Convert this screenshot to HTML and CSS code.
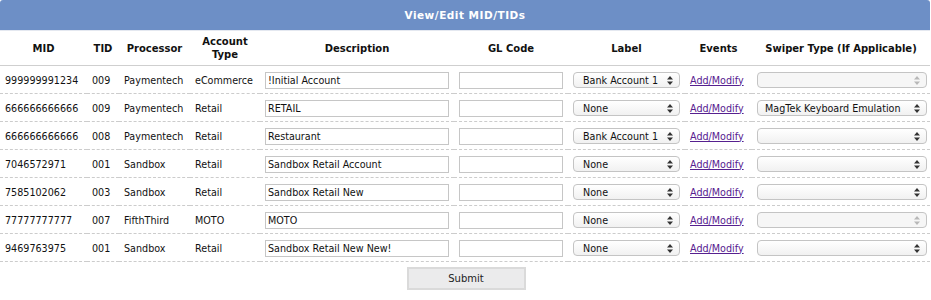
FILE: index.html
```html
<!DOCTYPE html>
<html>
<head>
<meta charset="utf-8">
<link rel="stylesheet" href="styles.css">
</head>
<body>
<form class="page">
<table class="grid">
  <colgroup>
    <col class="c-mid"><col class="c-tid"><col class="c-proc"><col class="c-type"><col class="c-desc"><col class="c-gl"><col class="c-label"><col class="c-events"><col class="c-swiper">
  </colgroup>
  <thead>
    <tr><th class="title" colspan="9">View/Edit MID/TIDs</th></tr>
    <tr class="heads">
      <th>MID</th><th>TID</th><th>Processor</th><th>Account<br>Type</th><th>Description</th><th>GL Code</th><th>Label</th><th>Events</th><th>Swiper Type (If Applicable)</th>
    </tr>
  </thead>
  <tbody>
    <tr>
      <td>999999991234</td><td>009</td><td>Paymentech</td><td>eCommerce</td>
      <td><input class="txt desc" value="!Initial Account"></td>
      <td><input class="txt gl" value=""></td>
      <td><span class="sel label-sel"><span class="val">Bank Account 1</span><svg class="arr" width="6" height="9" viewBox="0 0 6 9"><path d="M3 0L6 3.5H0Z M3 9L6 5.5H0Z"/></svg></span></td>
      <td><a class="lnk" href="#">Add/Modify</a></td>
      <td><span class="sel swiper-sel off"><span class="val"></span><svg class="arr" width="6" height="9" viewBox="0 0 6 9"><path d="M3 0L6 3.5H0Z M3 9L6 5.5H0Z"/></svg></span></td>
    </tr>
    <tr>
      <td>666666666666</td><td>009</td><td>Paymentech</td><td>Retail</td>
      <td><input class="txt desc" value="RETAIL"></td>
      <td><input class="txt gl" value=""></td>
      <td><span class="sel label-sel"><span class="val">None</span><svg class="arr" width="6" height="9" viewBox="0 0 6 9"><path d="M3 0L6 3.5H0Z M3 9L6 5.5H0Z"/></svg></span></td>
      <td><a class="lnk" href="#">Add/Modify</a></td>
      <td><span class="sel swiper-sel"><span class="val">MagTek Keyboard Emulation</span><svg class="arr" width="6" height="9" viewBox="0 0 6 9"><path d="M3 0L6 3.5H0Z M3 9L6 5.5H0Z"/></svg></span></td>
    </tr>
    <tr>
      <td>666666666666</td><td>008</td><td>Paymentech</td><td>Retail</td>
      <td><input class="txt desc" value="Restaurant"></td>
      <td><input class="txt gl" value=""></td>
      <td><span class="sel label-sel"><span class="val">Bank Account 1</span><svg class="arr" width="6" height="9" viewBox="0 0 6 9"><path d="M3 0L6 3.5H0Z M3 9L6 5.5H0Z"/></svg></span></td>
      <td><a class="lnk" href="#">Add/Modify</a></td>
      <td><span class="sel swiper-sel"><span class="val"></span><svg class="arr" width="6" height="9" viewBox="0 0 6 9"><path d="M3 0L6 3.5H0Z M3 9L6 5.5H0Z"/></svg></span></td>
    </tr>
    <tr>
      <td>7046572971</td><td>001</td><td>Sandbox</td><td>Retail</td>
      <td><input class="txt desc" value="Sandbox Retail Account"></td>
      <td><input class="txt gl" value=""></td>
      <td><span class="sel label-sel"><span class="val">None</span><svg class="arr" width="6" height="9" viewBox="0 0 6 9"><path d="M3 0L6 3.5H0Z M3 9L6 5.5H0Z"/></svg></span></td>
      <td><a class="lnk" href="#">Add/Modify</a></td>
      <td><span class="sel swiper-sel"><span class="val"></span><svg class="arr" width="6" height="9" viewBox="0 0 6 9"><path d="M3 0L6 3.5H0Z M3 9L6 5.5H0Z"/></svg></span></td>
    </tr>
    <tr>
      <td>7585102062</td><td>003</td><td>Sandbox</td><td>Retail</td>
      <td><input class="txt desc" value="Sandbox Retail New"></td>
      <td><input class="txt gl" value=""></td>
      <td><span class="sel label-sel"><span class="val">None</span><svg class="arr" width="6" height="9" viewBox="0 0 6 9"><path d="M3 0L6 3.5H0Z M3 9L6 5.5H0Z"/></svg></span></td>
      <td><a class="lnk" href="#">Add/Modify</a></td>
      <td><span class="sel swiper-sel"><span class="val"></span><svg class="arr" width="6" height="9" viewBox="0 0 6 9"><path d="M3 0L6 3.5H0Z M3 9L6 5.5H0Z"/></svg></span></td>
    </tr>
    <tr>
      <td>77777777777</td><td>007</td><td>FifthThird</td><td>MOTO</td>
      <td><input class="txt desc" value="MOTO"></td>
      <td><input class="txt gl" value=""></td>
      <td><span class="sel label-sel"><span class="val">None</span><svg class="arr" width="6" height="9" viewBox="0 0 6 9"><path d="M3 0L6 3.5H0Z M3 9L6 5.5H0Z"/></svg></span></td>
      <td><a class="lnk" href="#">Add/Modify</a></td>
      <td><span class="sel swiper-sel off"><span class="val"></span><svg class="arr" width="6" height="9" viewBox="0 0 6 9"><path d="M3 0L6 3.5H0Z M3 9L6 5.5H0Z"/></svg></span></td>
    </tr>
    <tr>
      <td>9469763975</td><td>001</td><td>Sandbox</td><td>Retail</td>
      <td><input class="txt desc" value="Sandbox Retail New New!"></td>
      <td><input class="txt gl" value=""></td>
      <td><span class="sel label-sel"><span class="val">None</span><svg class="arr" width="6" height="9" viewBox="0 0 6 9"><path d="M3 0L6 3.5H0Z M3 9L6 5.5H0Z"/></svg></span></td>
      <td><a class="lnk" href="#">Add/Modify</a></td>
      <td><span class="sel swiper-sel"><span class="val"></span><svg class="arr" width="6" height="9" viewBox="0 0 6 9"><path d="M3 0L6 3.5H0Z M3 9L6 5.5H0Z"/></svg></span></td>
    </tr>
  </tbody>
</table>
<div class="actions"><button type="button" class="submit">Submit</button></div>
</form>
</body>
</html>
```
FILE: styles.css
```css
html, body {
  margin: 0;
  padding: 0;
  background: #ffffff;
}
body {
  font-family: "DejaVu Sans", Verdana, sans-serif;
  font-size: 9.6px;
  color: #111111;
}
.page {
  width: 931px;
}
.grid {
  width: 930px;
  border-collapse: separate;
  border-spacing: 0;
  table-layout: fixed;
}
.c-mid { width: 87px; }
.c-tid { width: 32px; }
.c-proc { width: 71px; }
.c-type { width: 70px; }
.c-desc { width: 194px; }
.c-gl { width: 114px; }
.c-label { width: 117px; }
.c-events { width: 67px; }
.c-swiper { width: 178px; }

.title {
  background: #6d8fc6;
  color: #ffffff;
  font-weight: bold;
  font-size: 10.5px;
  height: 31px;
  padding: 0;
  box-sizing: border-box;
  text-align: center;
  border-radius: 3px 3px 0 0;
  border-bottom: 1px solid #e4e8f0;
  letter-spacing: 0.5px;
}
.heads th {
  font-weight: bold;
  font-size: 10px;
  line-height: 13px;
  height: 35px;
  box-sizing: border-box;
  padding: 0 5px;
  text-align: center;
  vertical-align: middle;
  border-bottom: 1px solid #cfcfcf;
  color: #111;
}
tbody td {
  height: 28px;
  box-sizing: border-box;
  padding: 1px 5px 0;
  border-bottom: 1px dashed #cccccc;
  vertical-align: middle;
  white-space: nowrap;
  overflow: hidden;
}
.txt {
  display: block;
  box-sizing: border-box;
  height: 17px;
  margin: 0;
  padding: 0 2px;
  border: 1px solid #c6c6c6;
  font-family: "DejaVu Sans", Verdana, sans-serif;
  font-size: 9.6px;
  color: #111;
  background: #fff;
  outline: none;
}
.desc { width: 184px; }
.gl { width: 104px; }
.sel {
  display: flex;
  align-items: center;
  justify-content: space-between;
  box-sizing: border-box;
  height: 16px;
  padding: 0 6px 0 9px;
  border: 1px solid #c4c4c4;
  border-radius: 4px;
  background: linear-gradient(#ffffff, #f1f1f1);
  font-size: 9.6px;
  color: #111;
}
.label-sel { width: 107px; }
.swiper-sel { width: 170px; padding-left: 7px; }
.arr { fill: #333; flex: none; }
.off { background: #f6f6f6; }
.off .arr { fill: #b8b8b8; }
.lnk {
  color: #56208f;
  text-decoration: underline;
}
.actions {
  display: flex;
  justify-content: center;
  padding-top: 5px;
}
.submit {
  width: 119px;
  height: 23px;
  background: #ebebec;
  border: 2px solid #dadada;
  font-family: "DejaVu Sans", Verdana, sans-serif;
  font-size: 10px;
  color: #222;
  padding: 0;
  margin-left: 1px;
}
```
